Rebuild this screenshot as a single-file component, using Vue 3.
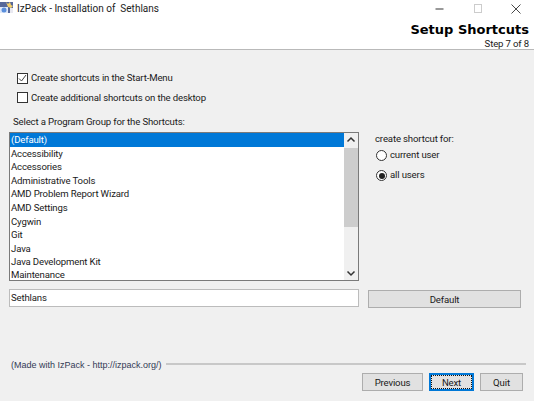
<script setup>
const groups = ['(Default)','Accessibility','Accessories','Administrative Tools','AMD Problem Report Wizard','AMD Settings','Cygwin','Git','Java','Java Development Kit','Maintenance']
</script>

<template>
  <div class="win">
    <div class="titlebar">
      <svg class="appicon" width="14" height="16" viewBox="0 0 14 16">
        <rect x="0" y="2" width="13" height="11" fill="#56689a"/>
        <rect x="0" y="7" width="8" height="6" fill="#dfe8f8"/>
        <circle cx="4" cy="10" r="2.500" fill="#5a8fdc"/>
        <path d="M6 2l2 2 2-2 1 3 2 1-2 2-3-1z" fill="#f4cf6a"/>
        <rect x="10" y="8" width="3" height="5" fill="#e8e8f0"/>
      </svg>
      <span class="wintitle">IzPack - Installation of &nbsp;Sethlans</span>
      <div class="controls">
        <svg width="12" height="12" viewBox="0 0 12 12"><path d="M1.500 6h8" stroke="#777" stroke-width="1.500"/></svg>
        <svg width="12" height="12" viewBox="0 0 12 12"><rect x="2.500" y="1.500" width="7" height="8" fill="none" stroke="#ccc"/></svg>
        <svg width="12" height="12" viewBox="0 0 12 12"><path d="M1.500 1.500l9 9M10.500 1.500l-9 9" stroke="#333" stroke-width="0.900"/></svg>
      </div>
    </div>
    <header class="head">
      <div class="h1">Setup Shortcuts</div>
      <div class="step">Step 7 of 8</div>
    </header>
    <main class="body">
      <label class="check"><span class="box"><svg width="9" height="9" viewBox="0 0 9 9"><path d="M1 4.500l2.500 2.500 4.500-6" fill="none" stroke="#444" stroke-width="1"/></svg></span><span class="up">Create shortcuts in the Start-Menu</span></label>
      <label class="check second"><span class="box"></span>Create additional shortcuts on the desktop</label>
      <div class="prompt">Select a Program Group for the Shortcuts:</div>
      <div class="middle">
        <div class="list">
          <div class="rows">
            <div v-for="(g, i) in groups" :key="g" class="row" :class="{ sel: i === 0 }">{{ g }}</div>
          </div>
          <div class="scroll">
            <svg width="14" height="14" viewBox="0 0 14 14"><path d="M3.500 8.500L7 5l3.500 3.500" fill="none" stroke="#333" stroke-width="1.500"/></svg>
            <div class="track"><div class="thumb"></div></div>
            <svg width="14" height="14" viewBox="0 0 14 14"><path d="M3.500 5.500L7 9l3.500-3.500" fill="none" stroke="#333" stroke-width="1.500"/></svg>
          </div>
        </div>
        <div class="side">
          <div class="sidehead">create shortcut for:</div>
          <label class="radio first"><span class="dot"></span><span class="up">current user</span></label>
          <label class="radio on"><span class="dot"></span><span class="up">all users</span></label>
        </div>
      </div>
      <div class="namerow">
        <div class="input">Sethlans</div>
        <div class="btn default">Default</div>
      </div>
      <div class="spacer"></div>
      <div class="made">
        <span class="madetext">(Made with IzPack - http://izpack.org/)</span>
        <div class="rule"></div>
      </div>
      <div class="nav">
        <div class="btn prev">Previous</div>
        <div class="btn next">Next</div>
        <div class="btn quit">Quit</div>
      </div>
    </main>
  </div>
</template>

<style scoped>
.win { width: 534px; height: 401px; display: flex; flex-direction: column; background: #f0f0f0; overflow: hidden; font: 9.600px/13px Roboto, sans-serif; letter-spacing: -0.150px; color: #1a1a1a; }
.titlebar { height: 17px; flex: none; background: #fff; display: flex; align-items: flex-start; }
.appicon { flex: none; }
.wintitle { margin: 2px 0 0 3px; font-size: 10px; line-height: 14px; color: #222; letter-spacing: 0; }
.controls { margin-left: auto; display: flex; gap: 26px; padding: 3px 12px 0 0; }
.head { height: 32px; flex: none; background: #fff; border-bottom: 1px solid #b9b9b9; display: flex; flex-direction: column; align-items: flex-end; padding-right: 5px; }
.h1 { font: bold 13px/19px "DejaVu Sans", sans-serif; letter-spacing: 0; color: #000; margin-top: 3px; }
.step { line-height: 11px; margin-top: -1px; }
.body { flex: 1; display: flex; flex-direction: column; padding: 22px 8px 10px 9px; min-height: 0; }
.check { display: flex; align-items: center; height: 12px; margin-left: 8px; gap: 3px; }
.second { margin-top: 7px; }
.up { margin-top: -2px; }
.box { width: 11px; height: 11px; box-sizing: border-box; border: 1px solid #333; background: #fff; display: block; flex: none; }
.box svg { display: block; }
.prompt { margin: 12px 0 0 4px; height: 13px; }
.middle { display: flex; margin-top: 4px; }
.list { width: 350px; height: 149px; box-sizing: border-box; border: 1px solid #7a7a7a; background: #fff; display: flex; overflow: hidden; flex: none; }
.rows { flex: 1; overflow: hidden; }
.row { height: 13.600px; line-height: 13.600px; padding-left: 1px; white-space: nowrap; }
.row:last-child { height: 11px; line-height: 12px; }
.sel { background: #0078d7; color: #fff; }
.scroll { width: 14px; flex: none; display: flex; flex-direction: column; background: #f0f0f0; }
.scroll svg { flex: none; display: block; }
.track { flex: 1; }
.thumb { height: 79px; margin-top: 1px; background: #cdcdcd; }
.side { margin-left: 16px; }
.sidehead { height: 13px; }
.radio { display: flex; align-items: center; height: 13px; margin-top: 7px; gap: 3px; margin-left: 1px; }
.first { margin-top: 4px; }
.dot { width: 11px; height: 11px; box-sizing: border-box; border: 1px solid #333; border-radius: 50%; background: #fff; flex: none; position: relative; }
.on .dot::after { content: ""; position: absolute; inset: 1.500px; border-radius: 50%; background: #222; }
.namerow { display: flex; align-items: flex-start; margin-top: 8px; }
.input { width: 350px; height: 18px; box-sizing: border-box; border: 1px solid #bcbcbc; background: #fff; line-height: 16px; padding-left: 1px; flex: none; }
.btn { height: 18px; box-sizing: border-box; border: 1px solid #adadad; background: #e1e1e1; display: flex; align-items: center; justify-content: center; flex: none; }
.default { width: 153px; margin: 1px 0 0 9px; }
.spacer { flex: 1; }
.made { display: flex; align-items: flex-start; height: 13px; margin-left: 2px; gap: 4px; font: 9px/13px "Liberation Sans", sans-serif; letter-spacing: 0; color: #333a55; }
.madetext { margin-top: 2px; }
.rule { flex: 1; height: 2px; margin-top: 6px; background: #c8c8c8; }
.nav { display: flex; justify-content: flex-end; margin: 3px 3px 0 0; }
.prev { width: 61px; }
.next { width: 45px; margin-left: 6px; border: 2px solid #0078d7; outline: 1px dotted #111; outline-offset: -3px; }
.quit { width: 43px; margin-left: 6px; }
</style>

<style>
html, body { margin: 0; }
</style>
